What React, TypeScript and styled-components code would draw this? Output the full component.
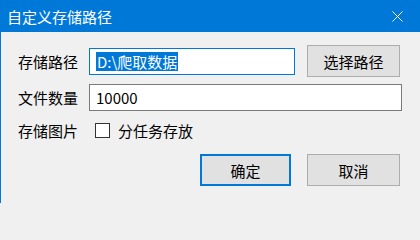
import React from 'react';
import styled, { createGlobalStyle } from 'styled-components';

const GlobalStyle = createGlobalStyle`
  html, body {
    margin: 0;
    padding: 0;
    background: #f0f0f0;
  }
  body {
    font-family: "Noto Sans CJK SC", "Microsoft YaHei", sans-serif;
    font-size: 15px;
    color: #000;
  }
`;

const Window = styled.div`
  width: 420px;
  height: 203px;
  box-sizing: border-box;
  border-left: 1px solid #0078d7;
  background: #f0f0f0;
  display: flex;
  flex-direction: column;
  overflow: hidden;
`;

const TitleBar = styled.div`
  height: 32px;
  flex: none;
  background: #0078d7;
  color: #fff;
  display: flex;
  align-items: center;
  justify-content: space-between;
  padding: 0 0 0 6px;
`;

const Title = styled.span`
  font-size: 15px;
  line-height: 1;
  margin-top: 1px;
`;

const CloseButton = styled.div`
  width: 46px;
  height: 32px;
  display: flex;
  align-items: center;
  justify-content: center;
  margin-right: 0;
`;

const Body = styled.div`
  padding: 13px 18px 0 17px;
  display: flex;
  flex-direction: column;
`;

const Row = styled.div<{ $height: number; $gap?: number }>`
  display: flex;
  align-items: center;
  height: ${p => p.$height}px;
  margin-top: ${p => p.$gap ?? 0}px;
`;

const Label = styled.span`
  width: 71px;
  flex: none;
  line-height: 1;
`;

const TextBox = styled.div<{ $focused?: boolean; $width?: number }>`
  box-sizing: border-box;
  height: 27px;
  ${p => (p.$width ? `width: ${p.$width}px;` : 'flex: 1;')}
  background: #fff;
  border: 1px solid ${p => (p.$focused ? '#0078d7' : '#7a7a7a')};
  display: flex;
  align-items: center;
  padding-left: 6px;
  line-height: 1;
  white-space: nowrap;
`;

const Selected = styled.span`
  background: #0078d7;
  color: #fff;
  padding: 2px 1px 2px 1px;
`;

const Button = styled.div<{ $default?: boolean }>`
  box-sizing: border-box;
  width: ${p => (p.$default ? 91 : 93)}px;
  height: 32px;
  flex: none;
  background: #e1e1e1;
  border: ${p => (p.$default ? '2px solid #0078d7' : '1px solid #adadad')};
  display: flex;
  align-items: center;
  justify-content: center;
  line-height: 1;
`;

const Check = styled.div`
  box-sizing: border-box;
  width: 15px;
  height: 15px;
  border: 1px solid #333;
  background: #fff;
  margin: 0 8px 0 6px;
  flex: none;
`;

const Actions = styled.div`
  display: flex;
  justify-content: flex-end;
  gap: 16px;
  margin-top: 11px;
  padding-right: 2px;
`;

const CloseIcon = () => (
  <svg width="11" height="11" viewBox="0 0 11 11">
    <path d="M0.5 0.5 L10.5 10.5 M10.5 0.5 L0.5 10.5" stroke="#fff" strokeWidth="1" fill="none" />
  </svg>
);

export default function App() {
  return (
    <>
      <GlobalStyle />
      <Window>
        <TitleBar>
          <Title>自定义存储路径</Title>
          <CloseButton>
            <CloseIcon />
          </CloseButton>
        </TitleBar>
        <Body>
          <Row $height={32}>
            <Label>存储路径</Label>
            <TextBox $focused $width={206}>
              <Selected>D:\爬取数据</Selected>
            </TextBox>
            <div style={{ width: 12 }} />
            <Button>选择路径</Button>
          </Row>
          <Row $height={28} $gap={6}>
            <Label>文件数量</Label>
            <TextBox>10000</TextBox>
          </Row>
          <Row $height={26} $gap={6}>
            <Label>存储图片</Label>
            <Check />
            <span>分任务存放</span>
          </Row>
          <Actions>
            <Button $default>确定</Button>
            <Button>取消</Button>
          </Actions>
        </Body>
      </Window>
    </>
  );
}
